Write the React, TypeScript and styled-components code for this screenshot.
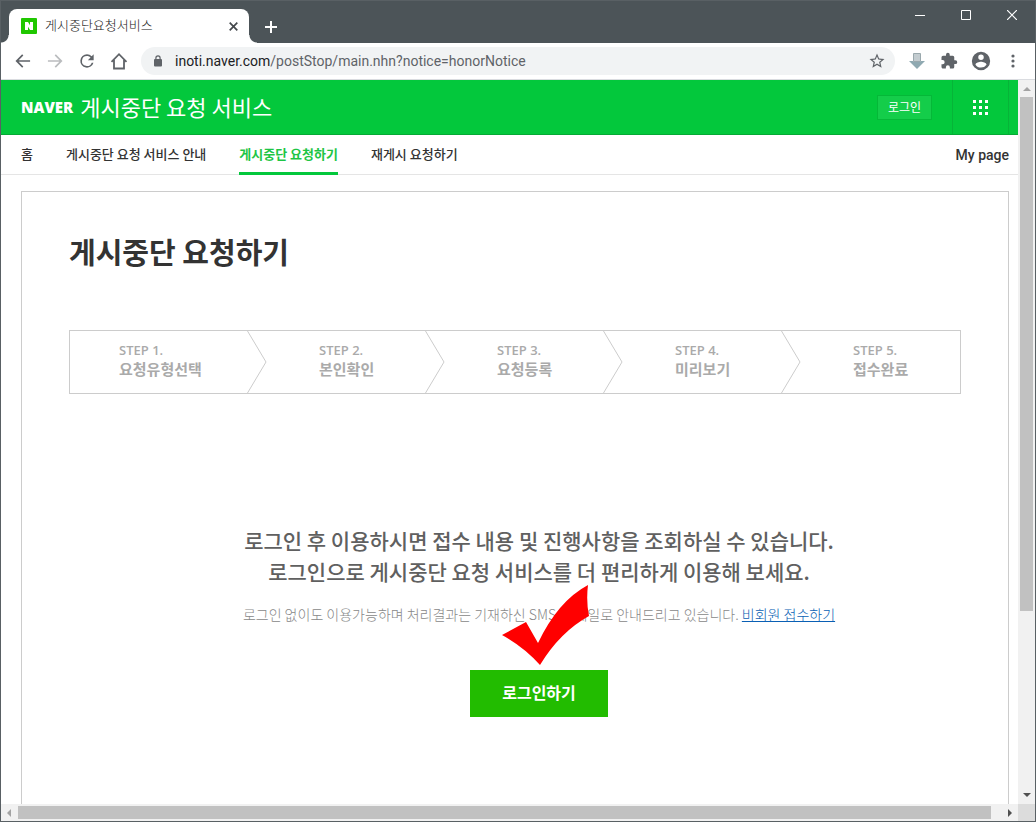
import React from 'react';
import styled, { createGlobalStyle, css } from 'styled-components';

const GlobalStyle = createGlobalStyle`
  *, *::before, *::after { box-sizing: border-box; }
  body { margin: 0; background: #fff; font-family: "Noto Sans CJK KR", "Noto Sans", sans-serif; color: #333; }
  button, input { font-family: inherit; margin: 0; }
  button { border: 0; padding: 0; background: none; cursor: pointer; }
  a { color: inherit; text-decoration: none; }
  ol, ul, h1, h2, p { margin: 0; padding: 0; list-style: none; }
  svg { display: block; }
`;

const Window = styled.div`
  height: 100vh;
  display: flex;
  flex-direction: column;
  border: 1px solid #596064;
  overflow: hidden;
`;

const TitleBar = styled.div`
  flex: none;
  height: 42px;
  display: flex;
  align-items: flex-end;
  padding-left: 8px;
  background: #4c5458;
`;

const Tab = styled.div`
  position: relative;
  display: flex;
  align-items: center;
  width: 240px;
  height: 34px;
  padding: 0 10px 0 12px;
  background: #fff;
  border-radius: 8px 8px 0 0;
  &::before, &::after {
    content: "";
    position: absolute;
    bottom: 0;
    width: 8px;
    height: 8px;
  }
  &::before { left: -8px; background: radial-gradient(circle at 0 0, transparent 7px, #fff 8px); }
  &::after { right: -8px; background: radial-gradient(circle at 100% 0, transparent 7px, #fff 8px); }
`;

const TabTitle = styled.span`
  flex: 1;
  margin-left: 8px;
  padding-bottom: 2px;
  font-size: 13px;
  font-weight: 300;
  line-height: 20px;
  color: #222;
`;

const IconButton = styled.button<{ $w?: number }>`
  display: flex;
  align-items: center;
  justify-content: center;
  width: ${(p) => p.$w ?? 32}px;
  height: 32px;
  flex: none;
`;

const NewTab = styled(IconButton)`
  margin-left: 6px;
`;

const Caption = styled.div`
  align-self: flex-start;
  display: flex;
  margin-left: auto;
`;

const CaptionButton = styled(IconButton)`
  width: 46px;
  height: 28px;
`;

const Toolbar = styled.div`
  flex: none;
  display: flex;
  align-items: center;
  height: 37px;
  padding: 0 6px;
  border-bottom: 1px solid #dadce0;
  background: #fff;
`;

const Omnibox = styled.div`
  flex: 1;
  display: flex;
  align-items: center;
  height: 28px;
  margin: 0 6px;
  padding: 0 2px 0 12px;
  border-radius: 14px;
  background: #f1f3f4;
  font-family: Roboto, sans-serif;
  font-size: 14px;
  line-height: 20px;
  color: #5f6368;
  b { font-weight: 400; color: #202124; }
`;

const Url = styled.span`
  flex: 1;
  margin-left: 12px;
`;

const Viewport = styled.div`
  flex: 1;
  min-height: 0;
  display: grid;
  grid-template-columns: minmax(0, 1fr) 17px;
  grid-template-rows: minmax(0, 1fr) 17px;
`;

const Page = styled.div`
  display: flex;
  flex-direction: column;
  overflow: hidden;
`;

const Header = styled.header`
  flex: none;
  display: flex;
  align-items: center;
  height: 55px;
  padding: 0 9px 0 20px;
  background: #03c83c;
  border-bottom: 1px solid #06a935;
  color: #fff;
`;

const Brand = styled.a`
  font-family: "Open Sans", sans-serif;
  font-size: 15px;
  font-weight: 800;
  line-height: 20px;
`;

const ServiceName = styled.h1`
  flex: 1;
  margin-left: 7px;
  padding-bottom: 2px;
  font-size: 22px;
  font-weight: 400;
  line-height: 32px;
`;

const LoginLink = styled.button`
  width: 55px;
  height: 25px;
  margin-right: 20px;
  border: 1px solid #05b838;
  background: #14cd4a;
  color: #fff;
  font-size: 12px;
  line-height: 22px;
`;

const AppsButton = styled.button`
  display: flex;
  align-items: center;
  justify-content: center;
  width: 57px;
  height: 54px;
  border: solid #06b438;
  border-width: 0 1px;
`;

const Nav = styled.nav`
  flex: none;
  display: flex;
  gap: 33px;
  height: 40px;
  padding: 0 9px 0 20px;
  border-bottom: 1px solid #e5e5e5;
`;

const NavLink = styled.a<{ $active?: boolean; $end?: boolean }>`
  height: 40px;
  font-size: 13px;
  font-weight: 500;
  line-height: 38px;
  white-space: nowrap;
  ${(p) => p.$active && css`
    color: #1ec545;
    border-bottom: 3px solid #03c83c;
    font-weight: 700;
  `}
  ${(p) => p.$end && css`
    margin-left: auto;
    font-family: Roboto, sans-serif;
    font-size: 14px;
    line-height: 40px;
  `}
`;

const Card = styled.main`
  flex: 1;
  display: flex;
  flex-direction: column;
  margin: 16px 9px 0 20px;
  padding: 38px 47px 0;
  border: 1px solid #ccc;
  border-bottom: 0;
`;

const Title = styled.h2`
  font-size: 29px;
  font-weight: 700;
  line-height: 42px;
`;

/* Each arrow head takes its room from the next step, so the first column is wider and the last one narrower. */
const Steps = styled.ol`
  display: grid;
  grid-template-columns: 197fr repeat(3, 178fr) 159fr;
  height: 64px;
  margin-top: 58px;
  border: 1px solid #ccc;
`;

const Step = styled.li`
  display: flex;
  min-width: 0;
  padding-left: 52px;
  color: #aaa;
  &:first-child { padding-left: 49px; }
`;

const StepText = styled.div`
  flex: 1;
  padding-top: 11px;
  font-size: 15px;
  font-weight: 700;
  line-height: 20px;
  white-space: nowrap;
`;

const StepNo = styled.span`
  display: block;
  font-family: "Open Sans", sans-serif;
  font-size: 13px;
  font-weight: 600;
  line-height: 17px;
`;

const Intro = styled.section`
  display: flex;
  flex-direction: column;
  align-items: center;
  margin-top: 131px;
  padding-left: 48px;
`;

const Lead = styled.p`
  font-size: 21px;
  font-weight: 500;
  line-height: 31px;
  text-align: center;
  color: #606060;
`;

const Note = styled.p`
  position: relative;
  margin-top: 15px;
  font-size: 14px;
  font-weight: 300;
  line-height: 24px;
  color: #888;
  white-space: nowrap;
  a { color: #0a5fb4; text-decoration: underline; }
`;

const CheckMark = styled.svg`
  position: absolute;
  left: calc(50% - 37px);
  top: -17px;
`;

const LoginButton = styled.button`
  width: 138px;
  height: 47px;
  margin-top: 44px;
  padding-bottom: 4px;
  background: #22bc00;
  color: #fff;
  font-size: 16px;
  font-weight: 700;
  line-height: 24px;
`;

const ScrollBar = styled.div<{ $vertical?: boolean }>`
  display: flex;
  flex-direction: ${(p) => (p.$vertical ? 'column' : 'row')};
  background: #f1f1f1;
`;

const ScrollArrow = styled.button`
  display: flex;
  align-items: center;
  justify-content: center;
  width: 17px;
  height: 17px;
  flex: none;
`;

const Track = styled.div<{ $vertical?: boolean }>`
  flex: 1;
  padding: ${(p) => (p.$vertical ? '0 2px' : '2px 0')};
`;

const Thumb = styled.div<{ $vertical?: boolean }>`
  width: ${(p) => (p.$vertical ? '100%' : '99%')};
  height: ${(p) => (p.$vertical ? '74.5%' : '100%')};
  background: #c1c1c1;
`;

const Corner = styled.div`
  background: #dcdcdc;
`;

const steps = ['요청유형선택', '본인확인', '요청등록', '미리보기', '접수완료'];

const Glyph = ({ d, color = '#5f6368', size = 20 }: { d: string; color?: string; size?: number }) => (
  <svg width={size} height={size} viewBox="0 0 24 24" fill={color}><path d={d} /></svg>
);

const Arrow = ({ d, color = '#505050' }: { d: string; color?: string }) => (
  <svg width="17" height="17" viewBox="0 0 17 17" fill={color}><path d={d} /></svg>
);

export default function App() {
  return (
    <>
      <GlobalStyle />
      <Window>
        <TitleBar>
          <Tab>
            <svg width="16" height="16" viewBox="0 0 16 16">
              <rect width="16" height="16" rx="1" fill="#20c700" />
              <path d="M4 4h3l2 3.300V4h3v8H9L7 8.700V12H4z" fill="#fff" />
            </svg>
            <TabTitle>게시중단요청서비스</TabTitle>
            <IconButton $w={12} aria-label="탭 닫기">
              <svg width="9" height="9" viewBox="0 0 9 9" stroke="#45494d" strokeWidth="1.700"><path d="M.7.7l7.600 7.600M8.300.7L.7 8.300" /></svg>
            </IconButton>
          </Tab>
          <NewTab aria-label="새 탭">
            <svg width="12" height="12" viewBox="0 0 12 12" stroke="#fff" strokeWidth="2"><path d="M6 0v12M0 6h12" /></svg>
          </NewTab>
          <Caption>
            <CaptionButton aria-label="최소화">
              <svg width="10" height="10" viewBox="0 0 10 10" stroke="#fff"><path d="M0 5.500h10" /></svg>
            </CaptionButton>
            <CaptionButton aria-label="최대화">
              <svg width="10" height="10" viewBox="0 0 10 10" stroke="#fff" fill="none"><path d="M.5.5h9v9h-9z" /></svg>
            </CaptionButton>
            <CaptionButton aria-label="닫기">
              <svg width="10" height="10" viewBox="0 0 10 10" stroke="#fff" strokeWidth="1.200"><path d="M0 0l10 10M10 0L0 10" /></svg>
            </CaptionButton>
          </Caption>
        </TitleBar>
        <Toolbar>
          <IconButton aria-label="뒤로"><Glyph d="M20.500 11H6.830l5.590-5.590L11 4l-8 8 8 8 1.410-1.410L6.830 13H20.500z" /></IconButton>
          <IconButton aria-label="앞으로"><Glyph color="#babcbe" d="M13 4l-1.410 1.410L17.170 11H3.500v2h13.670l-5.580 5.590L13 20l8-8z" /></IconButton>
          <IconButton aria-label="새로고침"><Glyph d="M17.650 6.350A7.960 7.960 0 0 0 12 4a8 8 0 1 0 7.730 10h-2.080A6 6 0 1 1 12 6c1.660 0 3.140.69 4.220 1.780L13 11h7V4z" /></IconButton>
          <IconButton aria-label="홈">
            <svg width="18" height="18" viewBox="0 0 18 18" fill="none" stroke="#5f6368" strokeWidth="1.800"><path d="M1.500 9.800L9 2.200l7.500 7.600M4 8v8.500h10V8" /></svg>
          </IconButton>
          <Omnibox>
            <svg width="10" height="12" viewBox="0 0 10 12"><rect x="1" y="4" width="8" height="7.500" rx="1" fill="#5f6368" /><path d="M2.900 4.500V3a2.100 2.100 0 0 1 4.200 0v1.500" fill="none" stroke="#5f6368" strokeWidth="1.200" /></svg>
            <Url><b>inoti.naver.com</b>/postStop/main.nhn?notice=honorNotice</Url>
            <IconButton aria-label="북마크"><Glyph size={18} d="M22 9.240l-7.190-.62L12 2 9.190 8.630 2 9.240l5.460 4.730L5.820 21 12 17.270 18.180 21l-1.630-7.030zM12 15.400l-3.760 2.270 1-4.280-3.320-2.880 4.380-.38L12 6.100l1.710 4.040 4.380.38-3.320 2.880 1 4.280z" /></IconButton>
          </Omnibox>
          <IconButton aria-label="다운로드">
            <svg width="16" height="16" viewBox="0 0 16 16"><path d="M4.500.5h7v8h-7z" fill="#c3ccd0" stroke="#9aa8ad" /><path d="M0 8h4.500v1h7V8H16l-8 8z" fill="#8fa9b1" /></svg>
          </IconButton>
          <IconButton aria-label="확장 프로그램"><Glyph size={18} d="M20.500 11H19V7a2 2 0 0 0-2-2h-4V3.500a2.500 2.500 0 0 0-5 0V5H4a2 2 0 0 0-2 2v3.800h1.500a2.700 2.700 0 0 1 0 5.400H2V20c0 1.100.9 2 2 2h3.800v-1.500a2.700 2.700 0 0 1 5.400 0V22H17a2 2 0 0 0 2-2v-4h1.500a2.500 2.500 0 0 0 0-5z" /></IconButton>
          <IconButton aria-label="프로필"><Glyph size={22} d="M12 2a10 10 0 1 0 0 20 10 10 0 0 0 0-20zm0 3a3 3 0 1 1 0 6 3 3 0 0 1 0-6zm0 14.200a7.200 7.200 0 0 1-6-3.220c.03-1.990 4-3.080 6-3.080s5.970 1.090 6 3.080a7.200 7.200 0 0 1-6 3.220z" /></IconButton>
          <IconButton aria-label="메뉴">
            <svg width="4" height="14" viewBox="0 0 4 14" fill="#5f6368"><circle cx="2" cy="2" r="1.600" /><circle cx="2" cy="7" r="1.600" /><circle cx="2" cy="12" r="1.600" /></svg>
          </IconButton>
        </Toolbar>
        <Viewport>
          <Page>
            <Header>
              <Brand href="#naver">NAVER</Brand>
              <ServiceName>게시중단 요청 서비스</ServiceName>
              <LoginLink>로그인</LoginLink>
              <AppsButton aria-label="서비스 더보기">
                <svg width="15" height="15" viewBox="0 0 15 15" fill="#fff">
                  {[0, 6, 12].map((y) => [0, 6, 12].map((x) => <rect key={`${x}-${y}`} x={x} y={y} width="3" height="3" />))}
                </svg>
              </AppsButton>
            </Header>
            <Nav>
              <NavLink href="#home">홈</NavLink>
              <NavLink href="#guide">게시중단 요청 서비스 안내</NavLink>
              <NavLink href="#stop" $active>게시중단 요청하기</NavLink>
              <NavLink href="#repost">재게시 요청하기</NavLink>
              <NavLink href="#mypage" $end>My page</NavLink>
            </Nav>
            <Card>
              <Title>게시중단 요청하기</Title>
              <Steps>
                {steps.map((name, i) => (
                  <Step key={name}>
                    <StepText><StepNo>STEP {i + 1}.</StepNo>{name}</StepText>
                    {i < steps.length - 1 && (
                      <svg width="20" height="62" viewBox="0 0 20 62" fill="none" stroke="#ccc"><path d="M.5 0L19 31 .5 62" /></svg>
                    )}
                  </Step>
                ))}
              </Steps>
              <Intro>
                <Lead>로그인 후 이용하시면 접수 내용 및 진행사항을 조회하실 수 있습니다.<br />로그인으로 게시중단 요청 서비스를 더 편리하게 이용해 보세요.</Lead>
                <Note>
                  로그인 없이도 이용가능하며 처리결과는 기재하신 SMS/이메일로 안내드리고 있습니다. <a href="#guest">비회원 접수하기</a>
                  <CheckMark width="88" height="81" viewBox="0 0 88 81" fill="#f00">
                    <path d="M86 0Q84 16 87 31Q58 47 38 80Q22 62 0 50L24 37L36 58Q56 16 86 0Z" />
                  </CheckMark>
                </Note>
                <LoginButton>로그인하기</LoginButton>
              </Intro>
            </Card>
          </Page>
          <ScrollBar $vertical>
            <ScrollArrow aria-label="위로 스크롤"><Arrow color="#a3a3a3" d="M5 11h8L9 7z" /></ScrollArrow>
            <Track $vertical><Thumb $vertical /></Track>
            <ScrollArrow aria-label="아래로 스크롤"><Arrow d="M5 6h8l-4 4z" /></ScrollArrow>
          </ScrollBar>
          <ScrollBar>
            <ScrollArrow aria-label="왼쪽으로 스크롤"><Arrow color="#a3a3a3" d="M10 5v8L6 9z" /></ScrollArrow>
            <Track><Thumb /></Track>
            <ScrollArrow aria-label="오른쪽으로 스크롤"><Arrow d="M7 5v8l4-4z" /></ScrollArrow>
          </ScrollBar>
          <Corner />
        </Viewport>
      </Window>
    </>
  );
}
